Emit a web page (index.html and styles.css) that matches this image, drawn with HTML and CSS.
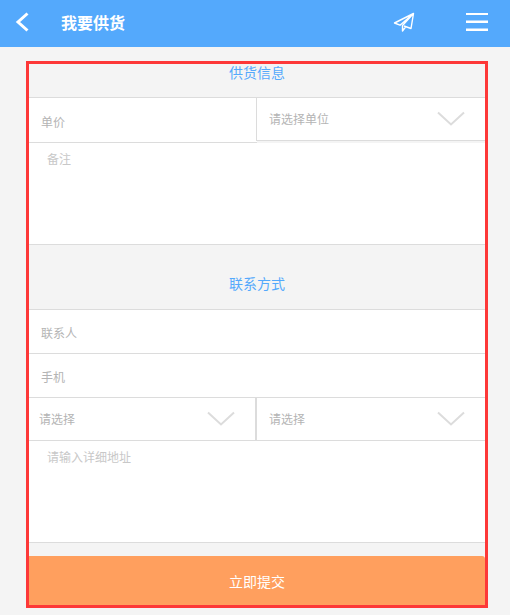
FILE: index.html
```html
<!DOCTYPE html>
<html lang="zh-CN">
<head>
  <meta charset="UTF-8">
  <meta name="viewport" content="width=device-width, initial-scale=1">
  <title>我要供货</title>
  <link rel="stylesheet" href="styles.css">
</head>
<body>

  <header class="header">
    <a href="#" class="back" aria-label="返回">
      <svg width="14" height="20" viewBox="0 0 14 20"><path d="M12.500 1.500L3 10l9.500 8.500" fill="none" stroke="#fff" stroke-width="3"/></svg>
    </a>
    <h1>我要供货</h1>
    <button type="button" class="icon-btn send" aria-label="发送">
      <svg width="22" height="20" viewBox="0 0 22 20" fill="none" stroke="#fff" stroke-width="1.400" stroke-linejoin="round"><path d="M20.500 1.500L1.500 11l5.500 2.200zM20.500 1.500L18 16.500l-7-2.500M20.500 1.500L9.500 13.500V19l3-4"/></svg>
    </button>
    <button type="button" class="icon-btn" aria-label="菜单">
      <svg width="22" height="20" viewBox="0 0 22 20" fill="#fff"><path d="M0 1h22v2H0zM0 9h22v2H0zM0 17h22v2H0z"/><path d="M0 8h22v1H0zM0 16h22v1H0z" opacity=".5"/></svg>
    </button>
  </header>

  <form class="supply">
    <h2 class="first">供货信息</h2>
    <div class="group">
      <div class="row">
        <input type="text" class="field price" placeholder="单价" aria-label="单价">
        <div class="select">
          <select aria-label="单位"><option>请选择单位</option></select>
          <svg class="arrow" width="28" height="16" viewBox="0 0 28 16"><path d="M1 1.500l13 12 13-12"/></svg>
        </div>
      </div>
      <textarea placeholder="备注" aria-label="备注"></textarea>
    </div>

    <h2>联系方式</h2>
    <div class="group">
      <input type="text" class="field" placeholder="联系人" aria-label="联系人">
      <input type="tel" class="field" placeholder="手机" aria-label="手机">
      <div class="row">
        <div class="select area">
          <select aria-label="省份"><option>请选择</option></select>
          <svg class="arrow" width="28" height="16" viewBox="0 0 28 16"><path d="M1 1.500l13 12 13-12"/></svg>
        </div>
        <div class="select">
          <select aria-label="城市"><option>请选择</option></select>
          <svg class="arrow" width="28" height="16" viewBox="0 0 28 16"><path d="M1 1.500l13 12 13-12"/></svg>
        </div>
      </div>
      <textarea placeholder="请输入详细地址" aria-label="详细地址"></textarea>
    </div>

    <button type="submit" class="submit">立即提交</button>
  </form>

</body>
</html>
```

FILE: styles.css
```css
* {
  box-sizing: border-box;
}

body {
  margin: 0;
  background: #f4f4f4;
  font-family: "Noto Sans CJK SC", sans-serif;
  font-size: 12px;
}

input, select, textarea, button {
  font-family: inherit;
  font-size: 12px;
  margin: 0;
  border: 0;
  border-radius: 0;
  outline: none;
}

/* top bar */
.header {
  display: flex;
  align-items: center;
  height: 47px;
  padding: 0 22px 3px 15px;
  background: #54a9fc;
}

.header svg {
  display: block;
}

.header h1 {
  flex: 1;
  margin: 0 0 0 32px;
  font-size: 16px;
  line-height: 22px;
  color: #fff;
}

.icon-btn {
  padding: 0;
  background: none;
}

.send {
  margin-right: 51px;
}

/* form */
.supply {
  margin: 14px 22px 7px 26px;
  border: 3px solid #fd3838;
}

.supply h2 {
  margin: 0;
  padding: 30px 0 18px;
  font-size: 14px;
  line-height: 16px;
  font-weight: normal;
  text-align: center;
  color: #54a9fc;
}

.supply .first {
  padding: 0 0 17px;
}

.group {
  border-top: 1px solid #dcdcdc;
}

.row {
  display: grid;
  grid-template-columns: 1fr 1fr;
  align-items: start;
}

.field {
  display: block;
  width: 100%;
  height: 44px;
  padding: 1px 12px 0;
  background: #fff;
  border-bottom: 1px solid #dcdcdc;
}

.price {
  height: 45px;
  padding-top: 2px;
}

.select {
  position: relative;
  margin-left: -1px;
  border-left: 1px solid #dcdcdc;
}

.area {
  margin-left: 0;
  border-left: 0;
  border-right: 1px solid #dcdcdc;
  margin-right: 1px;
}

.select select {
  appearance: none;
  display: block;
  width: 100%;
  height: 43px;
  padding: 0 48px 2px 12px;
  background: #fff;
  border-bottom: 1px solid #dcdcdc;
  color: #b4b4b4;
}

.area select {
  padding-left: 10px;
}

.arrow {
  position: absolute;
  right: 20px;
  top: 13px;
  fill: none;
  stroke: #dcdcdc;
  stroke-width: 2;
  pointer-events: none;
}

textarea {
  display: block;
  width: 100%;
  height: 102px;
  padding: 7px 18px;
  line-height: 18px;
  background: #fff;
  border-bottom: 1px solid #dcdcdc;
  resize: none;
}

.field::placeholder {
  color: #b4b4b4;
}

textarea::placeholder {
  color: #c8c8c8;
}

.submit {
  display: block;
  width: 100%;
  height: 49px;
  margin-top: 13px;
  padding: 0;
  background: #ff9f5e;
  border-radius: 0 3px 0 0;
  color: #fff;
  font-size: 14px;
}
```
